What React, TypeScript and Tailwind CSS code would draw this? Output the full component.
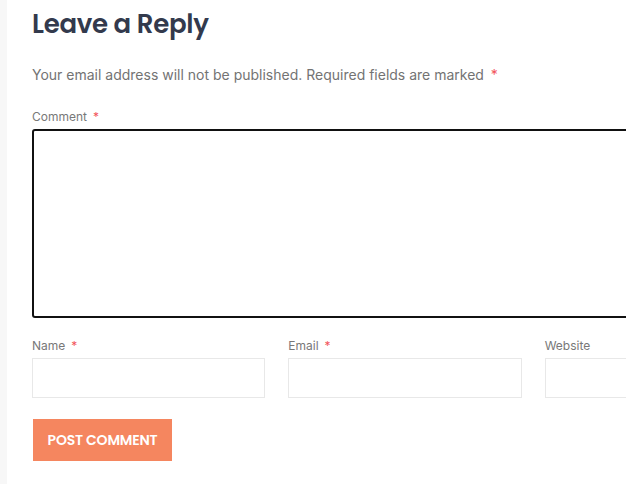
export default function App() {
  const label = "text-[12px] text-[#787878] leading-none flex items-center gap-[6px]";
  const star = <span className="text-[#f2545b]">*</span>;
  return (
    <div className="w-[626px] h-[484px] overflow-hidden bg-white flex" style={{ fontFamily: '"Inter", "Liberation Sans", sans-serif' }}>
      <div className="w-[7px] shrink-0 bg-[#f7f7f7]" />
      <div className="pl-[25px] pt-[7px] w-[780px] shrink-0">
        <h3 className="text-[26px] font-semibold text-[#333a4d] leading-[34px] tracking-[-0.3px]" style={{ fontFamily: '"Poppins", "Inter", sans-serif' }}>Leave a Reply</h3>
        <p className="mt-[25px] text-[14px] text-[#737373] leading-[18px]">
          Your email address will not be published. Required fields are marked <span className="ml-[3px] text-[#f2545b]">*</span>
        </p>
        <div className="mt-[27px] flex flex-col">
          <label className={label}>Comment {star}</label>
          <div className="mt-[6px] h-[189px] border-2 border-[#111] rounded-[3px] w-[760px]" />
        </div>
        <div className="mt-[22px] grid grid-cols-3 gap-x-[23px] w-[746px]">
          {[['Name', true], ['Email', true], ['Website', false]].map(([n, r]) => (
            <div key={n as string} className="flex flex-col">
              <label className={label}>{n as string} {r ? star : null}</label>
              <div className="mt-[6px] h-[40px] border border-[#e8e8e8] bg-white" />
            </div>
          ))}
        </div>
        <button className="mt-[21px] ml-[1px] w-[139px] h-[42px] bg-[#f5865f] text-white text-[14px] font-semibold tracking-[-0.2px]" style={{ fontFamily: '"Poppins", "Inter", sans-serif' }}>
          POST COMMENT
        </button>
      </div>
    </div>
  );
}
